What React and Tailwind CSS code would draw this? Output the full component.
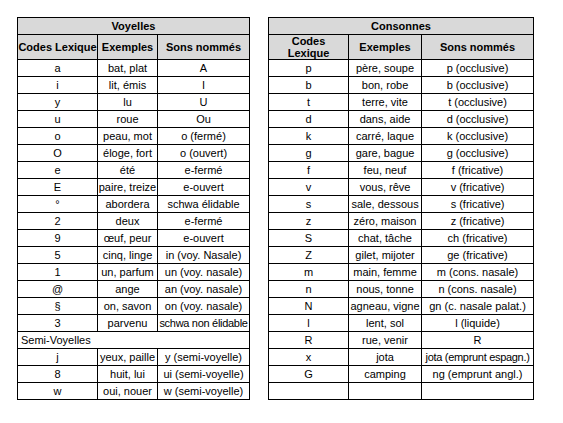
const voyelles = [
  ['a', 'bat, plat', 'A'],
  ['i', 'lit, émis', 'I'],
  ['y', 'lu', 'U'],
  ['u', 'roue', 'Ou'],
  ['o', 'peau, mot', 'o (fermé)'],
  ['O', 'éloge, fort', 'o (ouvert)'],
  ['e', 'été', 'e-fermé'],
  ['E', 'paire, treize', 'e-ouvert'],
  ['°', 'abordera', 'schwa élidable'],
  ['2', 'deux', 'e-fermé'],
  ['9', 'œuf, peur', 'e-ouvert'],
  ['5', 'cinq, linge', 'in (voy. Nasale)'],
  ['1', 'un, parfum', 'un (voy. nasale)'],
  ['@', 'ange', 'an (voy. nasale)'],
  ['§', 'on, savon', 'on (voy. nasale)'],
  ['3', 'parvenu', 'schwa non élidable', true],
]

const semi = [
  ['j', 'yeux, paille', 'y (semi-voyelle)'],
  ['8', 'huit, lui', 'ui (semi-voyelle)'],
  ['w', 'oui, nouer', 'w (semi-voyelle)'],
]

const consonnes = [
  ['p', 'père, soupe', 'p (occlusive)'],
  ['b', 'bon, robe', 'b (occlusive)'],
  ['t', 'terre, vite', 't (occlusive)'],
  ['d', 'dans, aide', 'd (occlusive)'],
  ['k', 'carré, laque', 'k (occlusive)'],
  ['g', 'gare, bague', 'g (occlusive)'],
  ['f', 'feu, neuf', 'f (fricative)'],
  ['v', 'vous, rêve', 'v (fricative)'],
  ['s', 'sale, dessous', 's (fricative)'],
  ['z', 'zéro, maison', 'z (fricative)'],
  ['S', 'chat, tâche', 'ch (fricative)'],
  ['Z', 'gilet, mijoter', 'ge (fricative)'],
  ['m', 'main, femme', 'm (cons. nasale)'],
  ['n', 'nous, tonne', 'n (cons. nasale)'],
  ['N', 'agneau, vigne', 'gn (c. nasale palat.)'],
  ['l', 'lent, sol', 'l (liquide)'],
  ['R', 'rue, venir', 'R'],
  ['x', 'jota', 'jota (emprunt espagn.)', true],
  ['G', 'camping', 'ng (emprunt angl.)'],
  ['', '', ''],
]

const cell = 'border border-black h-[17px] p-0 text-center align-middle whitespace-nowrap leading-[16px]'
const head = 'border border-black bg-[#d9d9d9] p-0 text-center align-middle font-bold leading-[12px]'

function Row({ r }) {
  return (
    <tr>
      <td className={cell}>{r[0]}</td>
      <td className={cell}>{r[1]}</td>
      <td className={cell + (r[3] ? ' tracking-[-0.3px]' : '')}>{r[2]}</td>
    </tr>
  )
}

export default function App() {
  return (
    <div className="w-[563px] h-[423px] bg-white pl-[17px] pt-[17px] flex items-start gap-[18px] text-[11px] text-black font-['Liberation_Sans',Arial,sans-serif]">
      <table className="table-fixed border-collapse w-[232px] shrink-0">
        <colgroup>
          <col className="w-[80px]" />
          <col className="w-[60px]" />
          <col className="w-[92px]" />
        </colgroup>
        <thead>
          <tr>
            <th colSpan={3} className={head + ' h-[17px]'}>Voyelles</th>
          </tr>
          <tr>
            <th className={head + ' h-[25px] whitespace-nowrap'}>Codes Lexique</th>
            <th className={head + ' h-[25px]'}>Exemples</th>
            <th className={head + ' h-[25px]'}>Sons nommés</th>
          </tr>
        </thead>
        <tbody>
          {voyelles.map((r, i) => <Row key={i} r={r} />)}
          <tr>
            <td colSpan={3} className={cell + ' text-left pl-[3px]'}>Semi-Voyelles</td>
          </tr>
          {semi.map((r, i) => <Row key={i} r={r} />)}
        </tbody>
      </table>

      <table className="table-fixed border-collapse w-[265px] shrink-0">
        <colgroup>
          <col className="w-[80px]" />
          <col className="w-[73px]" />
          <col className="w-[112px]" />
        </colgroup>
        <thead>
          <tr>
            <th colSpan={3} className={head + ' h-[17px]'}>Consonnes</th>
          </tr>
          <tr>
            <th className={head + ' h-[25px]'}>Codes<br />Lexique</th>
            <th className={head + ' h-[25px]'}>Exemples</th>
            <th className={head + ' h-[25px]'}>Sons nommés</th>
          </tr>
        </thead>
        <tbody>
          {consonnes.map((r, i) => <Row key={i} r={r} />)}
        </tbody>
      </table>
    </div>
  )
}
